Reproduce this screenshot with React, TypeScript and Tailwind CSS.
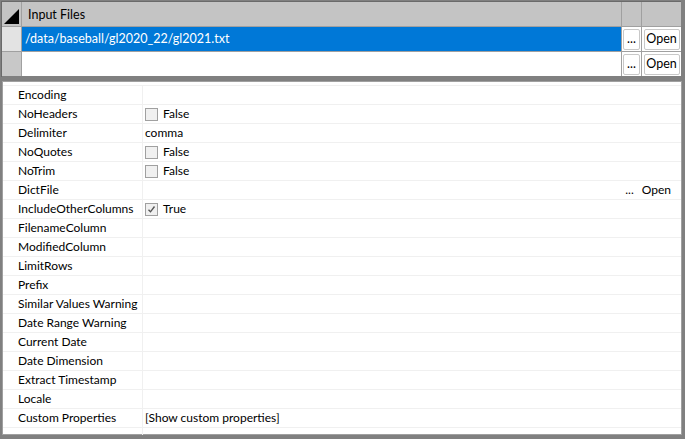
import React from 'react';

type Prop = {
  name: string;
  value?: string;
  check?: boolean;
  dict?: boolean;
};

const props: Prop[] = [
  { name: 'Encoding' },
  { name: 'NoHeaders', value: 'False', check: false },
  { name: 'Delimiter', value: 'comma' },
  { name: 'NoQuotes', value: 'False', check: false },
  { name: 'NoTrim', value: 'False', check: false },
  { name: 'DictFile', dict: true },
  { name: 'IncludeOtherColumns', value: 'True', check: true },
  { name: 'FilenameColumn' },
  { name: 'ModifiedColumn' },
  { name: 'LimitRows' },
  { name: 'Prefix' },
  { name: 'Similar Values Warning' },
  { name: 'Date Range Warning' },
  { name: 'Current Date' },
  { name: 'Date Dimension' },
  { name: 'Extract Timestamp' },
  { name: 'Locale' },
  { name: 'Custom Properties', value: '[Show custom properties]' },
];

function SmallButton({ label, wide }: { label: string; wide?: boolean }) {
  return (
    <div
      className={`h-[21px] ${wide ? 'w-[36px]' : 'w-[17px]'} bg-white border border-[#c8c8c8] rounded-[2px] flex items-center justify-center text-[12.5px] leading-none text-black`}
    >
      {label}
    </div>
  );
}

function FileRow({ path, selected }: { path: string; selected?: boolean }) {
  return (
    <div className="flex h-[25px] border-t border-[#a0a0a0]">
      <div className={`w-[20px] shrink-0 ${selected ? 'bg-[#e3e3e3]' : 'bg-[#c8c8c8]'} border-r border-[#a0a0a0]`} />
      <div
        className={`flex-1 flex items-center pl-[3px] text-[12.5px] ${selected ? 'bg-[#0078d7] text-white' : 'bg-white text-black'}`}
      >
        {path}
      </div>
      <div className="w-[20px] shrink-0 bg-white border-l border-[#a0a0a0] flex items-center justify-center">
        <SmallButton label="..." />
      </div>
      <div className="w-[40px] shrink-0 bg-white border-l border-[#a0a0a0] flex items-center justify-center">
        <SmallButton label="Open" wide />
      </div>
    </div>
  );
}

function Checkbox({ checked }: { checked?: boolean }) {
  return (
    <div className="w-[13px] h-[13px] bg-[#f0f0f0] border border-[#a0a0a0] flex items-center justify-center">
      {checked && (
        <svg width="9" height="9" viewBox="0 0 9 9">
          <path d="M1.5 4.8 L3.5 6.8 L7.5 1.5" fill="none" stroke="#555" strokeWidth="1.4" />
        </svg>
      )}
    </div>
  );
}

export default function App() {
  return (
    <div
      className="w-[685px] h-[439px] bg-[#808080] flex flex-col overflow-hidden"
      style={{ fontFamily: 'Lato, "Noto Sans", sans-serif' }}
    >
      {/* Input files grid */}
      <div className="h-[76px] mx-[1px] mt-[1px] mr-[4px] bg-[#808080] border-l border-t border-[#6a6a6a] flex flex-col">
        <div className="flex h-[24px] bg-[#c4c4c4]">
          <div className="w-[20px] shrink-0 border-r border-[#a0a0a0] flex items-end justify-end p-[2px]">
            <svg width="15" height="15" viewBox="0 0 15 15">
              <polygon points="15,0 15,15 0,15" fill="#000" />
            </svg>
          </div>
          <div className="flex-1 flex items-center pl-[6px] pt-[2px] text-[12.5px] text-black">Input Files</div>
          <div className="w-[20px] shrink-0 border-l border-[#a0a0a0]" />
          <div className="w-[40px] shrink-0 border-l border-[#a0a0a0]" />
        </div>
        <FileRow path="/data/baseball/gl2020_22/gl2021.txt" selected />
        <FileRow path="" />
      </div>

      {/* Property grid */}
      <div className="mt-[4px] ml-[2px] mr-[3px] h-[354px] bg-white border border-[#a0a0a0] flex flex-col pt-[3px]">
        <div className="border-t border-[#f0f0f0] flex flex-col">
          {props.map((p) => (
            <div key={p.name} className="flex h-[19px] border-b border-[#f0f0f0] text-[12px] text-black">
              <div className="w-[140px] shrink-0 pl-[15px] flex items-center whitespace-nowrap border-r border-[#f0f0f0]">
                {p.name}
              </div>
              <div className="flex-1 flex items-center pl-[2px]">
                {p.check !== undefined && (
                  <div className="mr-[5px]">
                    <Checkbox checked={p.check} />
                  </div>
                )}
                {p.value && <span>{p.value}</span>}
                {p.dict && (
                  <div className="flex-1 flex justify-end pr-[10px] gap-[8px]">
                    <span>...</span>
                    <span>Open</span>
                  </div>
                )}
              </div>
            </div>
          ))}
          <div className="flex h-[7px]">
            <div className="w-[140px] border-r border-[#f0f0f0]" />
          </div>
        </div>
      </div>
    </div>
  );
}
